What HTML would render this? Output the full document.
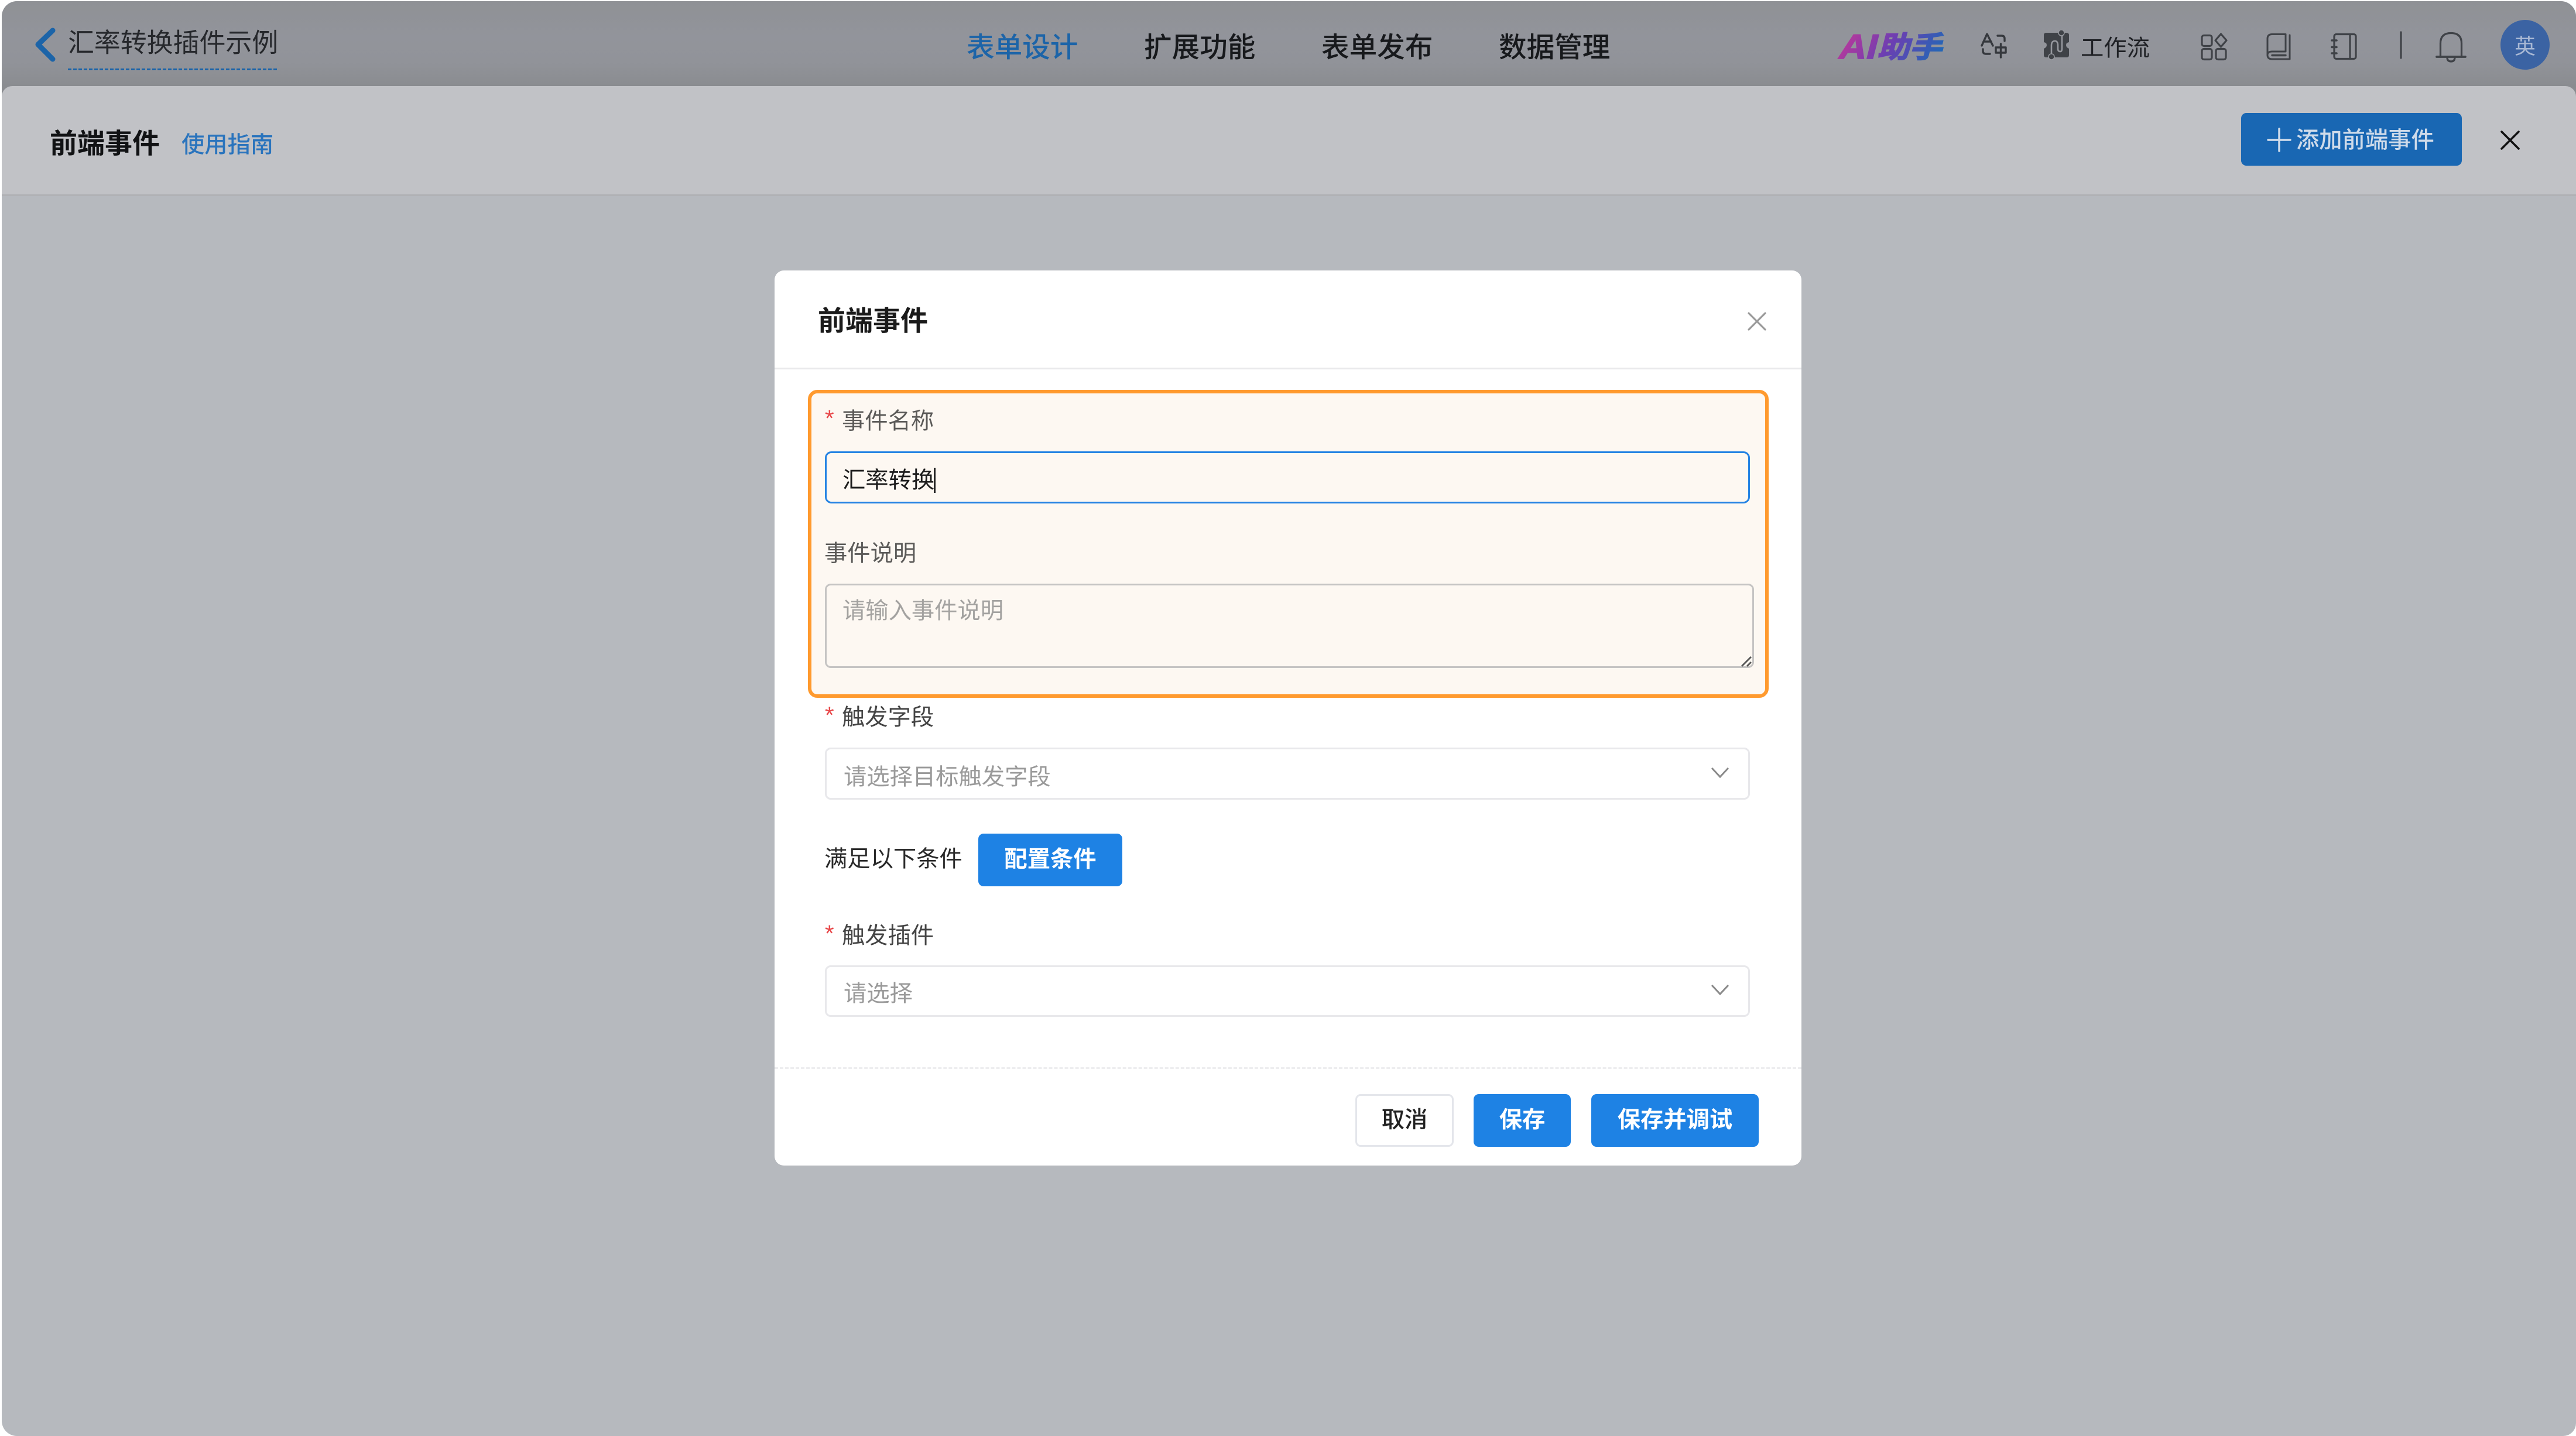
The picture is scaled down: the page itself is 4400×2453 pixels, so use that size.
<!DOCTYPE html>
<html lang="zh">
<head>
<meta charset="utf-8">
<title>前端事件</title>
<style>
html,body{margin:0;padding:0;width:4400px;height:2453px;overflow:hidden;background:#fff;}
body{position:relative;font-family:"Liberation Sans","Noto Sans CJK SC",sans-serif;}
.a{position:absolute;box-sizing:border-box;}
.t{position:absolute;white-space:nowrap;font-size:39.3px;line-height:60px;height:60px;transform:translateY(2.5px);}
#win{left:3px;top:2px;width:4397px;height:2451px;border-radius:26px 26px 22px 26px;overflow:hidden;background:#b6b9be;}
#bar{left:0;top:0;width:100%;height:175px;background:linear-gradient(180deg,#8f9195 0,#92949b 60px,#919399 105px,#8a8c90 145px);}
#panel{left:0;top:145px;width:100%;height:188px;background:#c1c2c6;border-bottom:3px solid #b0b1b5;border-radius:18px 18px 0 0;}
#dlg{left:1323px;top:462px;width:1754px;height:1529px;background:#fff;border-radius:16px;}
.btn{background:#1e82e4;border-radius:9px;color:#fff;font-weight:700;text-align:center;line-height:89px;font-size:39.3px;}
.sel{border:3px solid #e8e8eb;border-radius:10px;background:#fff;}
.star{color:#e8484a;font-size:40px;transform:none;}
</style>
</head>
<body>
<div class="a" id="win">
  <div class="a" id="bar"></div>
  <div class="a" id="panel"></div>
</div>

<!-- top bar text -->
<div class="t" style="left:116px;top:41px;font-size:44.9px;color:#26282c;">汇率转换插件示例</div>
<div class="a" style="left:116px;top:117px;width:358px;height:3px;background:repeating-linear-gradient(90deg,#1c64a8 0,#1c64a8 6px,transparent 6px,transparent 9px);"></div>
<div class="t" style="left:1651px;top:50px;font-size:47.6px;color:#1c64a8;font-weight:500;">表单设计</div>
<div class="t" style="left:1954px;top:50px;font-size:47.6px;color:#17191c;font-weight:500;">扩展功能</div>
<div class="t" style="left:2257px;top:50px;font-size:47.6px;color:#17191c;font-weight:500;">表单发布</div>
<div class="t" style="left:2560px;top:50px;font-size:47.6px;color:#17191c;font-weight:500;">数据管理</div>
<div class="t" style="left:3554px;top:50px;color:#1f2125;">工作流</div>

<!-- header icons -->
<svg class="a" style="left:0;top:0;" width="4400" height="340" viewBox="0 0 4400 340" fill="none">
  <defs>
    <linearGradient id="aig" gradientUnits="userSpaceOnUse" x1="5" y1="-50" x2="150" y2="8">
      <stop offset="0" stop-color="#bb389a"/>
      <stop offset=".5" stop-color="#6b3fb2"/>
      <stop offset="1" stop-color="#2366b6"/>
    </linearGradient>
  </defs>
  <!-- AI helper wordmark -->
  <g transform="translate(3138,100) scale(1.1,1) skewX(-13)" font-family="'Liberation Sans','Noto Sans CJK SC',sans-serif" font-weight="700" fill="url(#aig)" stroke="url(#aig)" stroke-width="1.800">
    <text x="0" y="0" font-size="59">AI</text>
    <text x="62" y="-2" font-size="50">助手</text>
  </g>
  <!-- back -->
  <path d="M90 52 L65 76 L90 101" stroke="#1c64a8" stroke-width="9" stroke-linecap="round" stroke-linejoin="round"/>
  <!-- translate -->
  <g stroke="#35383d" stroke-width="3.4" stroke-linecap="round" stroke-linejoin="round">
    <path d="M3385 78 L3394 58 L3404 78 M3388 71 H3401"/>
    <path d="M3412 61 H3419 Q3424 61 3424 66 V70"/>
    <path d="M3387 84 V87 Q3387 92 3392 92 H3399"/>
    <path d="M3409 81 H3426 V90 H3409 Z M3417.500 75 V98"/>
  </g>
  <!-- workflow -->
  <path d="M3495 56 H3530 Q3534 56 3534 60 V72 Q3529 73 3529 77 Q3529 81 3534 83 V94 Q3534 98 3530 98 H3495 Q3491 98 3491 94 V83 Q3496 81 3496 77 Q3496 73 3491 72 V60 Q3491 56 3495 56 Z" fill="#3f4247"/>
  <path d="M3504 96 V78 Q3504 70 3510 70 Q3515 70 3515 78 V83 Q3515 88 3519 88 Q3522 88 3522 83 V58" stroke="#96989e" stroke-width="2.6"/>
  <circle cx="3521" cy="56" r="5" fill="#3f4247" stroke="#96989e" stroke-width="1.5"/>
  <circle cx="3504" cy="97" r="5" fill="#3f4247" stroke="#96989e" stroke-width="1.5"/>
  <!-- grid -->
  <g stroke="#3f4247" stroke-width="3.2" stroke-linejoin="round">
    <rect x="3761" y="60.500" width="17" height="18" rx="3.500"/>
    <rect x="3761" y="83.500" width="17" height="18" rx="3.500"/>
    <rect x="3785" y="83.500" width="17" height="18" rx="3.500"/>
    <path d="M3793.500 58 L3803 69 L3793.500 80 L3784 69 Z"/>
  </g>
  <!-- book -->
  <g stroke="#3f4247" stroke-width="3" stroke-linecap="round" stroke-linejoin="round">
    <path d="M3873 94 V66 Q3873 58.500 3881 58.500 H3904 V88 H3881 Q3873 88 3873 94 Q3873 101 3881 101 H3911 V60"/>
    <path d="M3881 94.500 H3904" stroke-width="3.400"/>
  </g>
  <!-- notebook -->
  <g stroke="#3f4247" stroke-width="3.200" stroke-linecap="round" stroke-linejoin="round">
    <rect x="3987" y="58.500" width="37" height="42" rx="3.500"/>
    <path d="M4014 58.500 V100.500"/>
    <path d="M3983 69 H3991 M3983 80.500 H3991 M3983 91 H3991" stroke-width="3.600"/>
  </g>
  <!-- divider -->
  <path d="M4101 55 V99" stroke="#3f4247" stroke-width="3.200" stroke-linecap="round"/>
  <!-- bell -->
  <g stroke="#3f4247" stroke-width="3.200" stroke-linecap="round" stroke-linejoin="round">
    <path d="M4168.500 97 V74 Q4168.500 56.500 4186.500 56.500 Q4204.500 56.500 4204.500 74 V97"/>
    <path d="M4162 97 H4211" stroke-width="3.800"/>
    <path d="M4180 98 Q4180 105 4186.500 105 Q4193 105 4193 98"/>
  </g>
  <!-- close -->
  <path d="M4273 225 L4302 254 M4302 225 L4273 254" stroke="#111" stroke-width="3.600" stroke-linecap="round"/>
</svg>

<div class="a" style="left:4271px;top:34px;width:84px;height:85px;border-radius:50%;background:#3b63a3;"></div>
<div class="t" style="left:4271px;top:47px;width:84px;text-align:center;font-size:36px;color:#a8b8d4;">英</div>

<!-- panel content -->
<div class="t" style="left:85px;top:213px;font-size:47px;font-weight:700;color:#111214;">前端事件</div>
<div class="t" style="left:310px;top:215px;color:#2a74bd;font-weight:500;">使用指南</div>
<div class="a" style="left:3828px;top:193px;width:377px;height:90px;background:#1967b3;border-radius:9px;"></div>
<svg class="a" style="left:3870px;top:215px;" width="46" height="48" fill="none"><path d="M4 24 H42 M23 5 V43" stroke="#d3deeb" stroke-width="3.400" stroke-linecap="round"/></svg>
<div class="t" style="left:3922px;top:207px;color:#cfdbea;font-weight:500;">添加前端事件</div>

<!-- dialog -->
<div class="a" id="dlg"></div>
<div class="t" style="left:1397px;top:516px;font-size:47px;font-weight:700;color:#1a1a1a;">前端事件</div>
<svg class="a" style="left:2980px;top:528px;" width="42" height="42" fill="none"><path d="M7 7 L35 35 M35 7 L7 35" stroke="#9a9a9a" stroke-width="3.200" stroke-linecap="round"/></svg>
<div class="a" style="left:1323px;top:628px;width:1754px;height:3px;background:#e9e9eb;"></div>

<div class="a" style="left:1380px;top:666px;width:1641px;height:526px;background:#fdf8f2;border:6px solid #ff9a2e;border-radius:16px;"></div>
<div class="t star" style="left:1409px;top:685px;">*</div>
<div class="t" style="left:1438px;top:687px;color:#5b5a58;">事件名称</div>
<div class="a" style="left:1409px;top:771px;width:1580px;height:89px;border:3px solid #2583e3;border-radius:11px;"></div>
<div class="t" style="left:1439px;top:788px;color:#1c1c1c;">汇率转换</div>
<div class="a" style="left:1595px;top:799px;width:2.500px;height:43px;background:#222;"></div>
<div class="t" style="left:1408px;top:913px;color:#5b5a58;">事件说明</div>
<div class="a" style="left:1409px;top:997px;width:1587px;height:144px;border:3px solid #c5c4c3;border-radius:10px;"></div>
<div class="t" style="left:1439px;top:1011px;color:#a3a2a0;">请输入事件说明</div>
<svg class="a" style="left:2972px;top:1119px;" width="22" height="22" fill="none"><path d="M3 19 L19 3 M12 19 L19 12" stroke="#555" stroke-width="2.800"/></svg>

<div class="t star" style="left:1409px;top:1192px;">*</div>
<div class="t" style="left:1438px;top:1193px;color:#444;">触发字段</div>
<div class="a sel" style="left:1409px;top:1277px;width:1580px;height:89px;"></div>
<div class="t" style="left:1441px;top:1295px;color:#9a9a9a;">请选择目标触发字段</div>
<svg class="a" style="left:2920px;top:1308px;" width="36" height="24" fill="none"><path d="M4 4 L18 19 L32 4" stroke="#8a8a8a" stroke-width="3"/></svg>

<div class="t" style="left:1408px;top:1435px;color:#2a2a2a;">满足以下条件</div>
<div class="a btn" style="left:1671px;top:1424px;width:246px;height:90px;">配置条件</div>

<div class="t star" style="left:1409px;top:1565px;">*</div>
<div class="t" style="left:1438px;top:1566px;color:#444;">触发插件</div>
<div class="a sel" style="left:1409px;top:1649px;width:1580px;height:88px;"></div>
<div class="t" style="left:1441px;top:1665px;color:#9a9a9a;">请选择</div>
<svg class="a" style="left:2920px;top:1679px;" width="36" height="24" fill="none"><path d="M4 4 L18 19 L32 4" stroke="#8a8a8a" stroke-width="3"/></svg>

<div class="a" style="left:1323px;top:1823px;width:1754px;height:0;border-top:3px dashed #ededef;"></div>
<div class="a" style="left:2315px;top:1869px;width:168px;height:90px;border:3px solid #e4e6eb;border-radius:9px;background:#fff;color:#222;font-size:39.3px;font-weight:500;text-align:center;line-height:83px;">取消</div>
<div class="a btn" style="left:2517px;top:1869px;width:166px;height:90px;">保存</div>
<div class="a btn" style="left:2718px;top:1869px;width:286px;height:90px;">保存并调试</div>
</body>
</html>
